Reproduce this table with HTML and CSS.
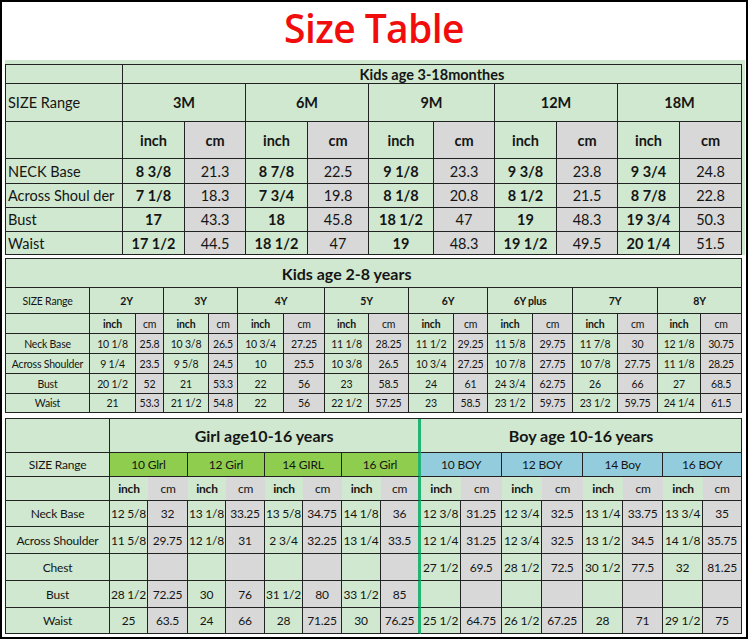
FILE: index.html
```html
<!DOCTYPE html>
<html>
<head>
<meta charset="utf-8">
<link rel="stylesheet" href="styles.css">
</head>
<body>
<div class="frame">
  <h1 class="title">Size Table</h1>

  <div class="wrap1">
    <table class="t t1">
      <colgroup>
        <col style="width:117px"><col style="width:62px"><col style="width:61px"><col style="width:62px"><col style="width:61px"><col style="width:65px"><col style="width:61px"><col style="width:62px"><col style="width:61px"><col style="width:62px"><col style="width:62px">
      </colgroup>
      <tr class="h19"><td class="g"></td><td class="g b" colspan="10">Kids age 3-18monthes</td></tr>
      <tr class="h38"><td class="g lab">SIZE Range</td><td class="g b" colspan="2">3M</td><td class="g b" colspan="2">6M</td><td class="g b" colspan="2">9M</td><td class="g b" colspan="2">12M</td><td class="g b" colspan="2">18M</td></tr>
      <tr class="h37"><td class="g"></td><td class="g b">inch</td><td class="y b">cm</td><td class="g b">inch</td><td class="y b">cm</td><td class="g b">inch</td><td class="y b">cm</td><td class="g b">inch</td><td class="y b">cm</td><td class="g b">inch</td><td class="y b">cm</td></tr>
      <tr class="h25"><td class="g lab">NECK Base</td><td class="g b">8 3/8</td><td class="y">21.3</td><td class="g b">8 7/8</td><td class="y">22.5</td><td class="g b">9 1/8</td><td class="y">23.3</td><td class="g b">9 3/8</td><td class="y">23.8</td><td class="g b">9 3/4</td><td class="y">24.8</td></tr>
      <tr class="h24"><td class="g lab">Across Shoul der</td><td class="g b">7 1/8</td><td class="y">18.3</td><td class="g b">7 3/4</td><td class="y">19.8</td><td class="g b">8 1/8</td><td class="y">20.8</td><td class="g b">8 1/2</td><td class="y">21.5</td><td class="g b">8 7/8</td><td class="y">22.8</td></tr>
      <tr class="h24"><td class="g lab">Bust</td><td class="g b">17</td><td class="y">43.3</td><td class="g b">18</td><td class="y">45.8</td><td class="g b">18 1/2</td><td class="y">47</td><td class="g b">19</td><td class="y">48.3</td><td class="g b">19 3/4</td><td class="y">50.3</td></tr>
      <tr class="h23"><td class="g lab">Waist</td><td class="g b">17 1/2</td><td class="y">44.5</td><td class="g b">18 1/2</td><td class="y">47</td><td class="g b">19</td><td class="y">48.3</td><td class="g b">19 1/2</td><td class="y">49.5</td><td class="g b">20 1/4</td><td class="y">51.5</td></tr>
    </table>
  </div>

  <table class="t t2">
    <colgroup>
      <col style="width:84px"><col style="width:46px"><col style="width:28px"><col style="width:45px"><col style="width:29px"><col style="width:46px"><col style="width:41px"><col style="width:44px"><col style="width:40px"><col style="width:45px"><col style="width:34px"><col style="width:45px"><col style="width:40px"><col style="width:45px"><col style="width:40px"><col style="width:43px"><col style="width:41px">
    </colgroup>
    <tr class="h29"><td class="g big t2title" colspan="17">Kids age 2-8 years</td></tr>
    <tr class="h26"><td class="g">SIZE Range</td><td class="g b" colspan="2">2Y</td><td class="g b" colspan="2">3Y</td><td class="g b" colspan="2">4Y</td><td class="g b" colspan="2">5Y</td><td class="g b" colspan="2">6Y</td><td class="g b" colspan="2">6Y plus</td><td class="g b" colspan="2">7Y</td><td class="g b" colspan="2">8Y</td></tr>
    <tr class="h20"><td class="g"></td><td class="g b">inch</td><td class="y">cm</td><td class="g b">inch</td><td class="y">cm</td><td class="g b">inch</td><td class="y">cm</td><td class="g b">inch</td><td class="y">cm</td><td class="g b">inch</td><td class="y">cm</td><td class="g b">inch</td><td class="y">cm</td><td class="g b">inch</td><td class="y">cm</td><td class="g b">inch</td><td class="y">cm</td></tr>
    <tr class="h20"><td class="g">Neck Base</td><td class="g">10 1/8</td><td class="y">25.8</td><td class="g">10 3/8</td><td class="y">26.5</td><td class="g">10 3/4</td><td class="y">27.25</td><td class="g">11 1/8</td><td class="y">28.25</td><td class="g">11 1/2</td><td class="y">29.25</td><td class="g">11 5/8</td><td class="y">29.75</td><td class="g">11 7/8</td><td class="y">30</td><td class="g">12 1/8</td><td class="y">30.75</td></tr>
    <tr class="h20"><td class="g">Across Shoulder</td><td class="g">9 1/4</td><td class="y">23.5</td><td class="g">9 5/8</td><td class="y">24.5</td><td class="g">10</td><td class="y">25.5</td><td class="g">10 3/8</td><td class="y">26.5</td><td class="g">10 3/4</td><td class="y">27.25</td><td class="g">10 7/8</td><td class="y">27.75</td><td class="g">10 7/8</td><td class="y">27.75</td><td class="g">11 1/8</td><td class="y">28.25</td></tr>
    <tr class="h20"><td class="g">Bust</td><td class="g">20 1/2</td><td class="y">52</td><td class="g">21</td><td class="y">53.3</td><td class="g">22</td><td class="y">56</td><td class="g">23</td><td class="y">58.5</td><td class="g">24</td><td class="y">61</td><td class="g">24 3/4</td><td class="y">62.75</td><td class="g">26</td><td class="y">66</td><td class="g">27</td><td class="y">68.5</td></tr>
    <tr class="h19"><td class="g">Waist</td><td class="g">21</td><td class="y">53.3</td><td class="g">21 1/2</td><td class="y">54.8</td><td class="g">22</td><td class="y">56</td><td class="g">22 1/2</td><td class="y">57.25</td><td class="g">23</td><td class="y">58.5</td><td class="g">23 1/2</td><td class="y">59.75</td><td class="g">23 1/2</td><td class="y">59.75</td><td class="g">24 1/4</td><td class="y">61.5</td></tr>
  </table>

  <table class="t t3">
    <colgroup>
      <col style="width:104px"><col style="width:38px"><col style="width:40px"><col style="width:38px"><col style="width:39px"><col style="width:38px"><col style="width:39px"><col style="width:39px"><col style="width:40px"><col style="width:40px"><col style="width:41px"><col style="width:40px"><col style="width:41px"><col style="width:40px"><col style="width:40px"><col style="width:40px"><col style="width:39px">
    </colgroup>
    <tr class="h34"><td class="g"></td><td class="g big tl" colspan="8">Girl age10-16 years</td><td class="g big" colspan="8">Boy age 10-16 years</td></tr>
    <tr class="h24"><td class="g">SIZE Range</td><td class="lg" colspan="2">10 Glrl</td><td class="lg" colspan="2">12 Girl</td><td class="lg" colspan="2">14 GIRL</td><td class="lg tl" colspan="2">16 Girl</td><td class="bl" colspan="2">10 BOY</td><td class="bl" colspan="2">12 BOY</td><td class="bl" colspan="2">14 Boy</td><td class="bl" colspan="2">16 BOY</td></tr>
    <tr class="h24 units"><td class="g keep"></td><td class="g b">inch</td><td class="y">cm</td><td class="g b">inch</td><td class="y">cm</td><td class="g b">inch</td><td class="y">cm</td><td class="g b">inch</td><td class="y tl">cm</td><td class="g b">inch</td><td class="y">cm</td><td class="g b">inch</td><td class="y">cm</td><td class="g b">inch</td><td class="y">cm</td><td class="g b">inch</td><td class="y keep">cm</td></tr>
    <tr class="h26"><td class="g">Neck Base</td><td class="g">12 5/8</td><td class="y">32</td><td class="g">13 1/8</td><td class="y">33.25</td><td class="g">13 5/8</td><td class="y">34.75</td><td class="g">14 1/8</td><td class="y tl">36</td><td class="g">12 3/8</td><td class="y">31.25</td><td class="g">12 3/4</td><td class="y">32.5</td><td class="g">13 1/4</td><td class="y">33.75</td><td class="g">13 3/4</td><td class="y">35</td></tr>
    <tr class="h27"><td class="g">Across Shoulder</td><td class="g">11 5/8</td><td class="y">29.75</td><td class="g">12 1/8</td><td class="y">31</td><td class="g">2 3/4</td><td class="y">32.25</td><td class="g">13 1/4</td><td class="y tl">33.5</td><td class="g">12 1/4</td><td class="y">31.25</td><td class="g">12 3/4</td><td class="y">32.5</td><td class="g">13 1/2</td><td class="y">34.5</td><td class="g">14 1/8</td><td class="y">35.75</td></tr>
    <tr class="h27"><td class="g">Chest</td><td class="g"></td><td class="y"></td><td class="g"></td><td class="y"></td><td class="g"></td><td class="y"></td><td class="g"></td><td class="y tl"></td><td class="g">27 1/2</td><td class="y">69.5</td><td class="g">28 1/2</td><td class="y">72.5</td><td class="g">30 1/2</td><td class="y">77.5</td><td class="g">32</td><td class="y">81.25</td></tr>
    <tr class="h27"><td class="g">Bust</td><td class="g">28 1/2</td><td class="y">72.25</td><td class="g">30</td><td class="y">76</td><td class="g">31 1/2</td><td class="y">80</td><td class="g">33 1/2</td><td class="y tl">85</td><td class="g"></td><td class="y"></td><td class="g"></td><td class="y"></td><td class="g"></td><td class="y"></td><td class="g"></td><td class="y"></td></tr>
    <tr class="h26"><td class="g">Waist</td><td class="g">25</td><td class="y">63.5</td><td class="g">24</td><td class="y">66</td><td class="g">28</td><td class="y">71.25</td><td class="g">30</td><td class="y tl">76.25</td><td class="g">25 1/2</td><td class="y">64.75</td><td class="g">26 1/2</td><td class="y">67.25</td><td class="g">28</td><td class="y">71</td><td class="g">29 1/2</td><td class="y">75</td></tr>
  </table>
</div>
</body>
</html>
```

FILE: styles.css
```css
html, body {
  margin: 0;
  padding: 0;
  background: #ffffff;
}

.frame {
  width: 748px;
  height: 639px;
  box-sizing: border-box;
  border: 2px solid #000;
  background: #fff;
  overflow: hidden;
  font-family: Lato, "Open Sans", sans-serif;
  color: #151515;
}

.title {
  margin: 0;
  height: 58px;
  box-sizing: border-box;
  padding-bottom: 7px;
  line-height: 51px;
  text-align: center;
  font-family: "Open Sans", sans-serif;
  font-weight: 600;
  font-size: 39px;
  letter-spacing: -0.6px;
  color: #f20d0d;
}

.wrap1 {
  margin-left: 3px;
  width: 740px;
  padding-top: 4px;
  background: #cfe8cf;
}

.t {
  border-collapse: separate;
  border-spacing: 0;
  table-layout: fixed;
  width: 737px;
  border-left: 1px solid #222;
  border-top: 1px solid #222;
}

.t td {
  border-right: 1px solid #222;
  border-bottom: 1px solid #222;
  padding: 0;
  text-align: center;
  vertical-align: middle;
  white-space: nowrap;
  overflow: hidden;
}

.t1 td { font-size: 14.5px; }
.t1 .lab { text-align: left; padding-left: 2px; }

.t2 {
  margin-top: 3px;
  margin-left: 3px;
}
.t2 td { font-size: 10.5px; letter-spacing: -0.2px; }
.t2 td.b { font-size: 10.5px; }
.t2 .t2title {
  text-align: center;
  padding-right: 54px;
}

.t3 {
  margin-top: 5px;
  margin-left: 3px;
}
.t3 td { font-size: 12px; letter-spacing: -0.2px; }
.t3 .units td { border-right: 0; }
.t3 .units td.keep { border-right: 1px solid #222; }
.t3 .units td.tl,
.t3 td.tl { border-right: 3px solid #22b473; }

.big { font-size: 16px !important; font-weight: 700; letter-spacing: 0 !important; }
.b { font-weight: 700; }
.g { background: #cfe8cf; }
.y { background: #d8d8d8; }
.lg { background: #8fcd4f; }
.bl { background: #93cddd; }

.h19 { height: 19px; }
.h20 { height: 20px; }
.h23 { height: 23px; }
.h24 { height: 24px; }
.h25 { height: 25px; }
.h26 { height: 26px; }
.h27 { height: 27px; }
.h29 { height: 29px; }
.h34 { height: 34px; }
.h37 { height: 37px; }
.h38 { height: 38px; }
```
